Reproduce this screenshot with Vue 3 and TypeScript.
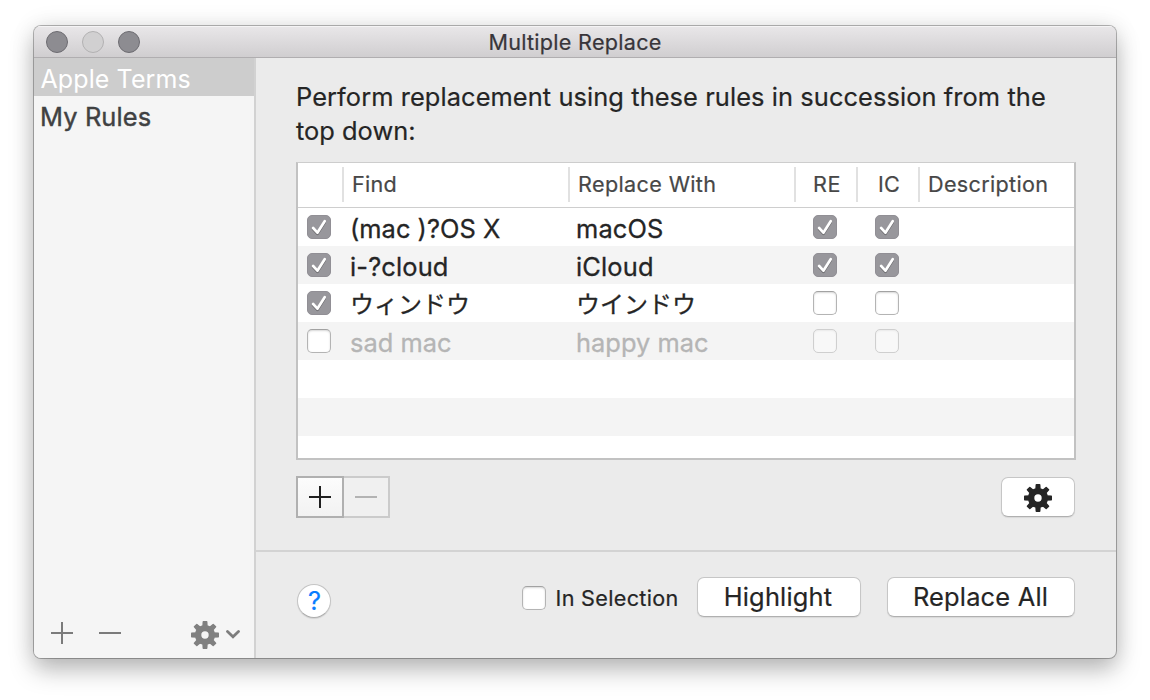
<script setup lang="ts">
import { ref } from 'vue'

interface Rule {
  enabled: boolean
  find: string
  replace: string
  re: boolean
  ic: boolean
  japanese?: boolean
  findClass: string
  replaceClass: string
}

const sets = ref([
  { name: 'Apple Terms', cls: 'set-terms' },
  { name: 'My Rules', cls: 'set-rules' },
])
const selected = ref(0)
const inSelection = ref(false)

const rules = ref<Rule[]>([
  { enabled: true, find: '(mac )?OS X', replace: 'macOS', re: true, ic: true, findClass: 'tight', replaceClass: 'wide' },
  { enabled: true, find: 'i-?cloud', replace: 'iCloud', re: true, ic: true, findClass: 'wide', replaceClass: 'wide' },
  { enabled: true, find: 'ウィンドウ', replace: 'ウインドウ', re: false, ic: false, japanese: true, findClass: '', replaceClass: '' },
  { enabled: false, find: 'sad mac', replace: 'happy mac', re: false, ic: false, findClass: 'tight', replaceClass: 'tight' },
])
const teeth = [0, 45, 90, 135, 180, 225, 270, 315]
</script>

<template>
  <div class="desktop">
    <div class="window">
      <header class="titlebar">
        <div class="lights">
          <span class="light"></span><span class="light off"></span><span class="light"></span>
        </div>
        <span class="title">Multiple Replace</span>
      </header>

      <div class="body">
        <aside class="sidebar">
          <ul class="sets">
            <li
              v-for="(s, i) in sets"
              :key="s.name"
              :class="['set', s.cls, { selected: i === selected }]"
              @click="selected = i"
            >{{ s.name }}</li>
          </ul>
          <div class="side-tools">
            <svg class="side-icon plus" viewBox="0 0 22 22"><path d="M0 11H22M11 0V22" /></svg>
            <svg class="side-icon minus" viewBox="0 0 22 22"><path d="M0 11H22" /></svg>
            <svg class="gear side-gear" viewBox="-14 -14 28 28">
              <circle r="6.9" />
              <path v-for="a in teeth" :key="a" class="tooth" d="M-2.8 -8L-2.4 -13.3Q-2.3 -14 -1.7 -14H1.7Q2.3 -14 2.4 -13.3L2.8 -8Z" :transform="`rotate(${a})`" />
            </svg>
            <svg class="chevron" viewBox="0 0 14 9"><path d="M1.5 1.5L7 6.7L12.5 1.5" /></svg>
          </div>
        </aside>

        <main class="main">
          <section class="upper">
            <p class="intro"><span>Perform replacement using these rules in succession from the</span><br />top down:</p>

            <div class="table">
              <div class="row head">
                <div class="cell"></div>
                <div class="cell h-find">Find</div>
                <div class="cell h-replace">Replace With</div>
                <div class="cell h-re">RE</div>
                <div class="cell h-ic">IC</div>
                <div class="cell h-desc">Description</div>
              </div>
              <div v-for="r in rules" :key="r.find" :class="['row', 'item', { dim: !r.enabled }]">
                <div class="cell check-first">
                  <span :class="['check', { on: r.enabled }]" @click="r.enabled = !r.enabled">
                    <svg v-if="r.enabled" viewBox="0 0 24 24"><path d="M6.1 13L10.4 17.7L17.7 6.2" /></svg>
                  </span>
                </div>
                <div :class="['cell', 'text', r.findClass, { jp: r.japanese }]">{{ r.find }}</div>
                <div :class="['cell', 'text', r.replaceClass, { jp: r.japanese }]">{{ r.replace }}</div>
                <div class="cell check-cell">
                  <span :class="['check', { on: r.re, disabled: !r.enabled }]">
                    <svg v-if="r.re" viewBox="0 0 24 24"><path d="M6.1 13L10.4 17.7L17.7 6.2" /></svg>
                  </span>
                </div>
                <div class="cell check-cell">
                  <span :class="['check', { on: r.ic, disabled: !r.enabled }]">
                    <svg v-if="r.ic" viewBox="0 0 24 24"><path d="M6.1 13L10.4 17.7L17.7 6.2" /></svg>
                  </span>
                </div>
                <div class="cell"></div>
              </div>
              <div class="row item"></div>
              <div class="row item"></div>
              <div class="row item last"></div>
            </div>

            <div class="actions">
              <div class="segment">
                <button class="seg add"><svg viewBox="0 0 22 22"><path d="M0 11H22M11 0V22" /></svg></button>
                <button class="seg remove"><svg viewBox="0 0 22 22"><path d="M0 11H22" /></svg></button>
              </div>
              <button class="btn gear-btn">
                <svg class="gear" viewBox="-14 -14 28 28">
                  <circle r="6.9" />
                  <path v-for="a in teeth" :key="a" class="tooth" d="M-2.8 -8L-2.4 -13.3Q-2.3 -14 -1.7 -14H1.7Q2.3 -14 2.4 -13.3L2.8 -8Z" :transform="`rotate(${a})`" />
                </svg>
              </button>
            </div>
          </section>

          <footer class="footer">
            <button class="help">?</button>
            <div class="footer-right">
              <label class="in-selection" @click="inSelection = !inSelection">
                <span :class="['check', { on: inSelection }]"></span>
                <span class="label">In Selection</span>
              </label>
              <button class="btn highlight">Highlight</button>
              <button class="btn replace-all">Replace All</button>
            </div>
          </footer>
        </main>
      </div>
    </div>
  </div>
</template>

<style>
html,
body {
  margin: 0;
  background: #fff;
  overflow: hidden;
}
</style>

<style scoped>
* {
  box-sizing: border-box;
}
.desktop {
  width: 1150px;
  height: 700px;
  padding: 26px 34px 42px;
  font-family: Inter, 'Noto Sans CJK JP', sans-serif;
  font-size: 25.4px;
  color: #252525;
  -webkit-text-stroke: 0.2px currentColor;
}
.window {
  width: 1082px;
  height: 632px;
  display: flex;
  flex-direction: column;
  border-radius: 7px;
  overflow: hidden;
  background: #ebebeb;
  box-shadow: 0 0 0 1px rgba(0, 0, 0, 0.28), 0 12px 24px rgba(0, 0, 0, 0.26), 0 0 24px rgba(0, 0, 0, 0.1);
}
.titlebar {
  flex: none;
  height: 32px;
  display: grid;
  grid-template-columns: 200px 1fr 200px;
  align-items: center;
  background: linear-gradient(#e9e7e9, #d0ced0);
  border-bottom: 1px solid #b0aeb0;
  box-shadow: inset 0 1px #f5f4f5;
}
.lights {
  display: flex;
  gap: 14px;
  padding: 1px 0 0 12px;
}
.light {
  width: 22px;
  height: 22px;
  border-radius: 50%;
  background: #8d8c91;
  border: 1px solid #6d6c71;
}
.light.off {
  background: #d1d0d1;
  border-color: #b2b1b2;
}
.title {
  text-align: center;
  font-size: 21.6px;
  letter-spacing: 0.27px;
  line-height: 30px;
  padding-top: 0;
  color: #38353a;
  white-space: nowrap;
}
.body {
  flex: 1;
  display: flex;
  min-height: 0;
}
.sidebar {
  width: 222px;
  flex: none;
  display: flex;
  flex-direction: column;
  justify-content: space-between;
  background: #f5f5f5;
  border-right: 2px solid #d2d2d2;
}
.sets {
  list-style: none;
  margin: 0;
  padding: 0;
}
.set {
  height: 38px;
  line-height: 38px;
  padding: 2px 0 0 6.5px;
  color: #404142;
}
.set-terms {
  font-size: 25px;
  letter-spacing: 0.1px;
  -webkit-text-stroke-width: 0;
}
.set-rules {
  letter-spacing: 0.14px;
  padding-left: 6px;
  -webkit-text-stroke-width: 0.4px;
}
.set.selected {
  background: #cdcdcd;
  color: #fff;
}
.side-tools {
  display: flex;
  align-items: center;
  height: 50px;
  padding-left: 17px;
}
.side-icon {
  width: 22px;
  height: 22px;
  margin-right: 26px;
}
.side-icon path {
  stroke: #7b7b7b;
  stroke-width: 2;
}
.gear {
  display: block;
  width: 28px;
  height: 28px;
}
.gear circle {
  fill: none;
  stroke: #252525;
  stroke-width: 6.4;
}
.gear .tooth {
  fill: #252525;
}
.side-gear {
  margin: 3px 0 0 44px;
}
.side-gear circle {
  stroke: #808080;
}
.side-gear .tooth {
  fill: #808080;
}
.chevron {
  width: 14px;
  height: 9px;
  margin: 2px 0 0 7px;
}
.chevron path {
  fill: none;
  stroke: #7d7d7d;
  stroke-width: 2.8;
  stroke-linecap: round;
}
.main {
  flex: 1;
  display: flex;
  flex-direction: column;
}
.upper {
  height: 494px;
  padding: 22px 40px 0;
  border-bottom: 2px solid #d3d3d3;
}
.intro {
  margin: 0;
  height: 82px;
  line-height: 34px;
  letter-spacing: 0.02px;
  white-space: nowrap;
}
.intro span {
  letter-spacing: 0.085px;
}
.table {
  width: 780px;
  height: 298px;
  border: 2px solid #c2c2c2;
  border-top: 1px solid #cdcdcd;
  background: #fff;
}
.row {
  display: grid;
  grid-template-columns: 45px 226px 226px 62px 62px 155px;
}
.head {
  height: 45px;
  padding-top: 4px;
  border-bottom: 1px solid #cecece;
  font-size: 21.6px;
  line-height: 35px;
  color: #474747;
}
.head .cell {
  height: 35px;
  margin-left: -1px;
  border-left: 2px solid #e1e1e1;
}
.head .cell:first-child {
  border-left: 0;
}
.h-find {
  padding-left: 8px;
  letter-spacing: 0.25px;
}
.h-replace {
  padding-left: 8px;
  letter-spacing: 0.36px;
}
.h-re {
  padding-left: 17px;
  letter-spacing: 0.5px;
}
.h-ic {
  padding-left: 20px;
  letter-spacing: 0.1px;
}
.h-desc {
  padding-left: 8px;
  letter-spacing: 0.32px;
}
.item {
  height: 38px;
}
.item:nth-child(odd) {
  background: #f4f4f4;
}
.item.last {
  height: 22px;
  background: #fff;
}
.text {
  height: 38px;
  line-height: 38px;
  padding: 2px 0 0 7px;
  white-space: nowrap;
  -webkit-text-stroke-width: 0.3px;
}
.dim .text {
  color: #b5b5b5;
}
.jp {
  font-family: 'Noto Sans CJK JP', sans-serif;
  font-size: 24px;
  padding-top: 0;
}
.wide {
  letter-spacing: 0.16px;
}
.tight {
  letter-spacing: 0.04px;
}
.check-first {
  padding: 7px 0 0 9px;
}
.check-cell {
  padding: 7px 0 0 18px;
}
.check {
  display: block;
  flex: none;
  width: 24px;
  height: 24px;
  border-radius: 5px;
  background: #fff;
  border: 1px solid #b4b4b4;
  border-top-color: #a2a2a2;
  box-shadow: inset 0 1px 2px rgba(0, 0, 0, 0.16);
}
.check.on {
  background: #98979c;
  border-color: #918f95;
  box-shadow: none;
}
.check.disabled {
  background: #f8f8f8;
  border-color: #cfcfcf;
  box-shadow: inset 0 1px 2px rgba(0, 0, 0, 0.06);
}
.check svg {
  display: block;
  width: 24px;
  height: 24px;
  margin: -1px;
  filter: drop-shadow(0 1px 0.6px rgba(0, 0, 0, 0.35));
}
.check path {
  fill: none;
  stroke: #fff;
  stroke-width: 2.7;
  stroke-linecap: round;
  stroke-linejoin: round;
}
button {
  font-family: inherit;
  font-size: 25.4px;
  color: #252525;
  padding: 0;
  margin: 0;
}
.actions {
  display: flex;
  justify-content: space-between;
  padding: 16px 1px 0 0;
}
.segment {
  display: flex;
}
.seg {
  height: 42px;
  display: flex;
  align-items: center;
  justify-content: center;
}
.seg svg {
  display: block;
  width: 22px;
  height: 22px;
}
.add {
  width: 48px;
  border: 2px solid #b0b0b0;
  background: linear-gradient(#fcfcfc, #f2f2f2);
}
.add path {
  stroke: #1f1f1f;
  stroke-width: 2;
}
.remove {
  width: 46px;
  border: 2px solid #cbcbcb;
  border-left: 0;
  background: #f0f0f0;
}
.remove path {
  stroke: #b3b3b3;
  stroke-width: 2;
}
.btn {
  height: 40px;
  line-height: 38px;
  border: 1px solid #c6c6c6;
  border-bottom-color: #b0b0b0;
  border-radius: 7px;
  background: #fff;
  box-shadow: 0 1px 1px rgba(0, 0, 0, 0.08);
}
.gear-btn {
  width: 74px;
  margin-top: 1px;
  padding-top: 2px;
  display: flex;
  align-items: center;
  justify-content: center;
}
.footer {
  flex: 1;
  display: flex;
  justify-content: space-between;
  align-items: flex-start;
  padding: 25px 41px 0 41px;
}
.help {
  width: 34px;
  height: 34px;
  margin-top: 7px;
  padding-left: 1px;
  border-radius: 50%;
  border: 1px solid #c4c4c4;
  border-bottom-color: #adadad;
  background: #fff;
  color: #087dff;
  line-height: 32px;
  box-shadow: 0 1px 1px rgba(0, 0, 0, 0.1);
}
.footer-right {
  display: flex;
  align-items: center;
}
.in-selection {
  display: flex;
  align-items: center;
  gap: 9.5px;
  margin-top: 2px;
  font-size: 21.6px;
  width: 175px;
  white-space: nowrap;
}
.label {
  letter-spacing: 0.33px;
  line-height: 26px;
}
.highlight {
  width: 164px;
  padding-right: 2px;
  letter-spacing: 0.2px;
}
.replace-all {
  width: 188px;
  margin-left: 26px;
  padding-right: 1px;
  letter-spacing: 0.2px;
}
</style>
